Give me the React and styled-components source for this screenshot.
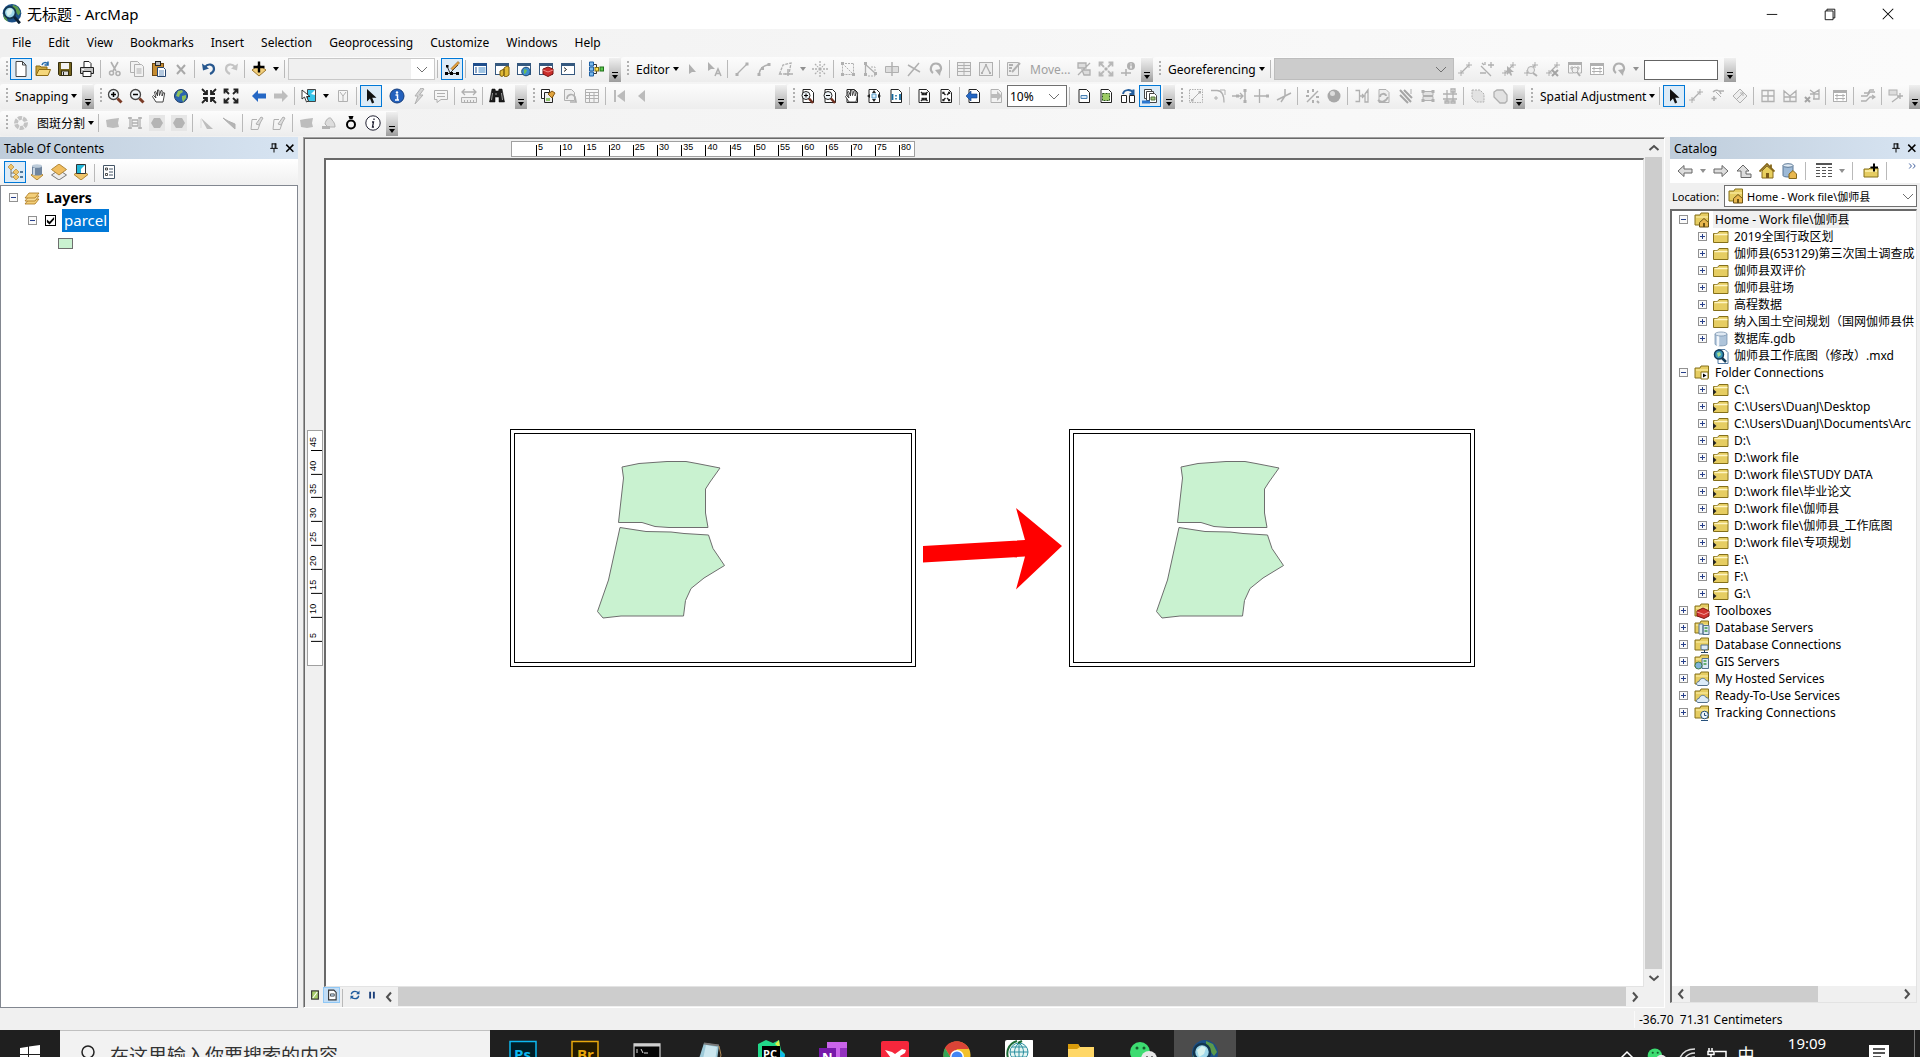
import styled, { createGlobalStyle, css } from "styled-components"

const GlobalStyle = createGlobalStyle`
  * {
    box-sizing: border-box;
  }

  body {
    margin: 0;
    overflow: hidden;
    font-family: "Noto Sans", "Noto Sans CJK SC", sans-serif;
    font-size: 12px;
    color: #000;
  }

  button, input, select {
    font: inherit;
    color: inherit;
    margin: 0;
    padding: 0;
    border: 0;
    background: none;
  }
`;

/* ---------- icons ---------- */

const G = '#b0b0b0';
const D = '#222';
const Y = '#e6cd62';

const page = <path d="M3 1.5h7.5l3 3v10H3z" fill="#fff" stroke={D} />;
const greyPage = <path d="M3 1.5h7.5l3 3v10H3z" fill="#f2f2f2" stroke={G} />;
const backFolder = <><path d="M1 3h5l1-2h7.500v12H1z" fill={Y} stroke="#85701a" /><path d="M2 5h12" stroke="#fff3b0" /></>;
const globe = <><circle cx="8" cy="8" r="6.500" fill="#2c66b0" stroke="#1b3b66" /><path d="M5 3l4-1 1 2-3 2-1 3-3-1zM9 8l4-1v3l-3 4-1-3z" fill="#8fc25a" /></>;
const win = (c) => <><rect x="1.500" y="2.500" width="13" height="11" fill="#fff" stroke={c} /><path d="M1 3.500h14" stroke={c} strokeWidth="3" /></>;
const lens = <><circle cx="6.500" cy="6.500" r="5" fill="#eef4f8" stroke="#444" strokeWidth="1.300" /><path d="M10.500 10.500l4 4" stroke="#7a3b26" strokeWidth="3" /></>;
const inward = (c) => <path d="M1 1l4 4M15 1l-4 4M1 15l4-4M15 15l-4-4M6 2v4H2M10 2v4h4M6 14v-4H2M10 14v-4h4" stroke={c} strokeWidth="1.800" fill="none" />;
const outward = (c) => <path d="M2 2l4 4M14 2l-4 4M2 14l4-4M14 14l-4-4M1.500 5.500v-4h4M10.500 1.500h4v4M1.500 10.500v4h4M10.500 14.500h4v-4" stroke={c} strokeWidth="1.800" fill="none" />;
const hand = <path d="M5 14L1.500 8.500l1-1L5 10 3.500 4l1.200-.5L6.500 8 6.500 2h1.300L8.500 7.500 10 2.500l1.200.3L11 8l1.500-3.500 1.200.5L12 14z" fill="#fff" stroke="#333" strokeWidth=".9" />;
const smallInward = <path d="M5 4l2.500 2.500M11.500 4L9 6.500M5 13l2.500-2.500M11.500 13L9 10.500M7.500 4.500v2h-2M9 4.500v2h2M7.500 12.500v-2h-2M9 12.500v-2h2" stroke={D} strokeWidth="1.400" fill="none" />;
const smallOutward = <path d="M5 6V4.500h1.500M10 4.500h1.500V6M5 11v1.500h1.500M10 12.500h1.500V11M5 4.500l2.500 2.500M11.500 4.500L9 7M5 12.500L7.500 10M11.500 12.500L9 10" stroke={D} strokeWidth="1.400" fill="none" />;
const leftArrow = (c) => <path d="M1 8l6-6v3.500h8v5H7V14z" fill={c} />;
const rightArrow = (c) => <path d="M15 8L9 2v3.500H1v5h8V14z" fill={c} />;
const link = <><path d="M4 12l8-8" stroke={G} strokeWidth="1.300" /><path d="M1 12h6M4 9v6M9 4h6M12 1v6" stroke={G} /></>;
const pointer = <path d="M4 1v12.500l3-3 2 5 2.200-1-2-4.700H13.500z" fill="#111" />;
const lensOnPage = (
  <>
    {page}
    <circle cx="6" cy="7.500" r="4" fill="#eef4f8" stroke={D} />
    <path d="M9 10.500l4 4.500" stroke="#6f2f1f" strokeWidth="2.500" />
  </>
);

const icons = {
  newDoc: <path d="M3 .5h6.500L13 4v11.500H3zM9.500.5V4H13" fill="#fff" stroke="#444" />,
  open: <><path d="M1 14V5h4l1 1h6v3" fill="#c9a53a" stroke="#8d6a13" /><path d="M1 14.500L4 8.500h11.500L13 14.500z" fill="#f5d77b" stroke="#8d6a13" /><path d="M7 4c1-3 4-3 6-1M13 .5V4H9.500" fill="none" stroke="#2268a8" strokeWidth="1.500" /></>,
  save: <><path d="M1.500 1.500h13v13h-12l-1-1z" fill="#76651d" stroke="#352e10" /><rect x="4" y="2" width="8" height="6" fill="#f4f4f4" /><rect x="4.500" y="10" width="7" height="4.500" fill="#ddd" stroke="#352e10" /><path d="M6.500 11v3" stroke={D} /></>,
  print: <><path d="M5 7V.5h5l2 2V7" fill="#fff" stroke={D} /><path d="M1.500 6.500h13v6h-13z" fill="#c5c5c5" stroke={D} /><path d="M4 10.500h8v5H4z" fill="#fff" stroke={D} /><path d="M3 8.500h2" stroke="#fff" /></>,
  cut: <><path d="M4 1l5 9M11 1L6 10" stroke={G} strokeWidth="1.600" /><circle cx="4.500" cy="12" r="2" fill="none" stroke={G} strokeWidth="1.500" /><circle cx="11" cy="12.500" r="2" fill="none" stroke={G} strokeWidth="1.500" /></>,
  copy: <g fill="#f2f2f2" stroke={G}><path d="M1.500.5h7l2 2v9h-9z" /><path d="M5.500 3.500h7l2 2v10h-9zM7.500 8h5M7.500 10h5M7.500 12h5" /></g>,
  paste: <><rect x="1.500" y="2.500" width="11" height="12" fill="#c58c31" stroke="#6d4815" /><rect x="4.500" y=".5" width="5" height="4" fill="#bbb" stroke={D} /><path d="M6.500 6.500h6l2 2v7h-8z" fill="#fff" stroke="#26456f" /><path d="M8 10h5M8 12h5M8 14h5" stroke="#6a92bd" /></>,
  del: <path d="M4 4l8 9M12 4L4 13" stroke="#a9a9a9" strokeWidth="2" />,
  undo: <><path d="M4 6c3-4 9-3 9 2 0 3-2 4-4 5" fill="none" stroke="#28588f" strokeWidth="2.200" /><path d="M1 2.500l1 7 6-2z" fill="#28588f" /></>,
  redo: <><path d="M12 6C9 2 3 3 3 8c0 3 2 4 4 5" fill="none" stroke="#c4c4c4" strokeWidth="2.200" /><path d="M15 2.500l-1 7-6-2z" fill="#c4c4c4" /></>,
  addData: <><path d="M8 4l7 5-7 6-7-6z" fill="#f3cf7a" stroke="#9b7630" /><path d="M8 .5v11M2.500 6h11" stroke="#000" strokeWidth="2.400" /></>,
  editor: <><path d="M2 12.500h12M3 5l3 7L14 4" stroke="#333" fill="none" /><path d="M7 7.500L14 .5l1.500 1.500-7 7z" fill="#e8a33a" stroke="#8a5418" strokeWidth=".6" /><path d="M1 11h3v3H1zM6 11h3v3H6zM12 11h3v3h-3zM2 4h2.500v2.500H2z" fill="#000" /></>,
  tocWin: <>{win('#1f4e8c')}<path d="M3 7h2M3 9h2M3 11h2" stroke="#1f4e8c" /><path d="M6.500 7h7M6.500 9h7M6.500 11h7" stroke="#3e87c7" /></>,
  catalogWin: <>{win('#36597f')}<path d="M6 10l4-2v6l-2 1.500-2-1zM10 7l3-2 2 1v8l-3 2-2-1z" fill="#e0ba36" stroke="#7b5d0e" /></>,
  searchWin: <>{win('#36597f')}<circle cx="10" cy="10.500" r="4.300" fill="#3d8ccf" stroke="#1d4770" /><path d="M8 8l3 1-1 3-2 1z" fill="#6bbf59" /></>,
  toolboxWin: <>{win('#36597f')}<path d="M5 8l5-2 5 2v5l-5 2.500L5 13z" fill="#cb2e2b" stroke="#771413" /><path d="M5 9l5 2 5-2" stroke="#f08a86" fill="none" /></>,
  python: <>{win('#36597f')}<path d="M4 6.500l2.500 2L4 10.500" stroke={D} fill="none" /></>,
  model: <><path d="M5 3.500h3.500v9H5M8.500 8H11" stroke="#333" fill="none" /><path d="M1.500 1h4v4h-4zM1.500 6h4v4h-4zM1.500 11h4v4h-4z" fill="#79b8ea" stroke="#1c5fa3" /><rect x="7" y="6.500" width="3.500" height="3.500" fill="#ffe14f" stroke="#86700e" /><rect x="12" y="6" width="3.500" height="4" fill="#5cc74f" stroke="#20711a" /></>,
  playGrey: <path d="M5 3v10l3-2h4z" fill={G} />,
  annotGrey: <><path d="M2 1v9l3-2h4z" fill={G} /><path d="M9 15l3-7 3 7M10 12.500h4" fill="none" stroke={G} strokeWidth="1.500" /></>,
  line: <><path d="M3 13L13 3" stroke={G} strokeWidth="1.300" /><path d="M1.500 12h3v3h-3zM11.500 1.500h3v3h-3z" fill={G} /></>,
  arc: <><path d="M3 13C4 7 7 5 13 3.500" fill="none" stroke={G} strokeWidth="1.500" /><path d="M1.500 12h3v3h-3zM5 6h3v3H5zM11.500 2h3v3h-3z" fill={G} /></>,
  poly: <><path d="M1.500 13L5 4l8-2-2 11z" fill="none" stroke={G} strokeWidth="1.300" strokeDasharray="3 1" /><path d="M10 8v7M7 13h8" stroke={G} strokeWidth="1.500" /></>,
  burst: <><path d="M8 0v5M8 11v5M0 8h5M11 8h5M3 3l3 3M13 3l-3 3M3 13l3-3M13 13l-3-3" stroke={G} strokeWidth="1.300" strokeDasharray="2 1" /><path d="M6.500 6.500h3v3h-3z" fill={G} /></>,
  edges: <><path d="M2.500 2.500v11M2.500 2.500L13 13M2.500 13.500h11M13.500 2.500v11M2 2.500h11" fill="none" stroke={G} strokeDasharray="2 1" /><path d="M1 1h3v3H1zM1 12h3v3H1zM12 12h3v3h-3z" fill={G} /></>,
  reshape: <><path d="M3.500 1v13M3 3l10 9" stroke={G} strokeWidth="1.300" /><path d="M9 6h4v9H5" fill="none" stroke={G} strokeDasharray="2 1" /><path d="M2 1h3v3H2zM2 12h3v3H2zM12 11h3v3h-3z" fill={G} /></>,
  cutPoly: <><path d="M1.500 5.500h13v6h-13z" fill="#ddd" stroke={G} /><path d="M8 1v14" stroke={G} strokeWidth="1.500" /></>,
  split: <path d="M2 15L13 2M2 4l12 7" stroke={G} strokeWidth="1.500" />,
  rotate: <><path d="M5 12C1 9 3 2.500 8 2.500s7 6 2.500 9" fill="none" stroke={G} strokeWidth="2.200" /><path d="M7 9l5 6 1-7z" fill={G} /></>,
  table: <><rect x="1.500" y="1.500" width="13" height="13" fill="#eee" stroke={G} /><path d="M2 4.500h12M2 7.500h12M2 10.500h12M8 2v12" stroke={G} /></>,
  sketchProps: <><rect x="1.500" y="1.500" width="13" height="13" fill="#eee" stroke={G} /><path d="M4 12l4-8 4 8" fill="none" stroke={G} strokeWidth="1.300" /><path d="M3 11h2v2H3zM7 3h2v2H7zM11 11h2v2h-2z" fill={G} /></>,
  createFeat: <><path d="M1.500 1.500h11v13h-11z" fill="#eee" stroke={G} /><path d="M3 4h4M3 7h3M3 10h2M6 11l8-9" stroke={G} strokeWidth="2" /></>,
  hatch: <><path d="M2 14L14 2M2 2h8v5H2zM6 9h8v5H8z" fill="#ddd" stroke={G} strokeWidth="1.300" /></>,
  expand: <>{outward('#b8b8b8')}<path d="M6.500 6.500h3v3h-3z" fill={G} /></>,
  infoPoint: <><circle cx="11" cy="5" r="4" fill={G} /><path d="M11 2.500v1M11 4.500v3" stroke="#fff" strokeWidth="1.300" /><path d="M1 12h10M6 8v7" stroke={G} strokeWidth="1.500" /></>,
  link,
  autoLink: <><path d="M9 4h6M12 1v6M2 5l10 10M1 12h6M3 2l2 2M6 1v3" stroke={G} strokeWidth="1.300" /></>,
  selectLink: <>{link}<path d="M6 5v9l2-2 2 3 1-1-1-3h3z" fill={G} /></>,
  zoomLink: <>{link}<circle cx="8" cy="9" r="3.500" fill="#eee" stroke={G} /><path d="M10 12l4 3" stroke={G} strokeWidth="2" /></>,
  delLink: <>{link}<path d="M7 9l6 6M13 9l-6 6" stroke="#a4a4a4" strokeWidth="2" /></>,
  viewLink: <><path d="M1 2.500h14" stroke={G} strokeWidth="3" /><path d="M1.500 2v10h5M14.500 2v10h-2M3 7h10M5 5v4M11 5v4" fill="none" stroke={G} /><circle cx="8" cy="9" r="3" fill="#eee" stroke={G} /><path d="M10 11l3 4" stroke={G} strokeWidth="2" /></>,
  linkTable: <>{win(G)}<path d="M3 7.500h10M3 10.500h10M5 6v3M11 6v3M5 9.500v3M11 9.500v3" stroke={G} /></>,
  zoomIn: <>{lens}<path d="M4 6.500h5M6.500 4v5" stroke="#000" strokeWidth="1.500" /></>,
  zoomOut: <>{lens}<path d="M4 6.500h5" stroke="#000" strokeWidth="1.500" /></>,
  pan: hand,
  globe,
  fixedIn: inward(D),
  fixedOut: outward(D),
  back: leftArrow('#2467c4'),
  forward: rightArrow('#bdbdbd'),
  selectFeat: <><path d="M6.500 1.500h8v12h-8z" fill="#37c4e8" stroke="#444" /><path d="M10 6l4-4v5z" fill="#fff" /><path d="M1 2v9l2.500-2 2 5 2-1-2-4.500H9z" fill="#fff" stroke="#222" strokeWidth=".9" /></>,
  clearSel: <path d="M3.500 2.500h9v11h-9zM5 4l3 4 3-4M8 8v5" fill="none" stroke={G} />,
  pointer,
  identify: <><circle cx="8" cy="8" r="7" fill="#2461bd" stroke="#163e7c" /><circle cx="8" cy="4.500" r="1.200" fill="#fff" /><path d="M6.500 7h2v5M6 12h4" stroke="#fff" strokeWidth="1.500" fill="none" /></>,
  bolt: <path d="M10 0L4 8h3l-3 8 8-9H8.500L13 1z" fill="#d5d5d5" stroke={G} />,
  popup: <path d="M1.500 2.500h13v9H8l-4 3v-3H1.500zM4 5.500h8M4 8.500h8" fill="none" stroke={G} />,
  measure: <><path d="M1 4h14M4 1L1 4l3 3M12 1l3 3-3 3" fill="none" stroke={G} strokeWidth="1.300" /><path d="M.5 9.500h15v5H.5zM3.500 12v2M6.500 12v2M9.500 12v2M12.500 12v2" fill="#eee" stroke={G} /></>,
  find: <><path d="M3 1h3l.5 2h3L10 1h3l2.500 13H10V9H6v5H.5z" fill="#1d1d1d" stroke="#000" strokeWidth=".5" /><path d="M3.500 5L2.500 12M12.500 5l1 7M7 5v2" stroke="#9a9a9a" /></>,
  layersPage: <><path d="M1.500 1.500h8v9h-8z" fill="#fff" stroke={D} /><path d="M4.500 4.500h8v10h-8z" fill="#eee" stroke={D} /><path d="M8 6l4-3 3 2-3 5z" fill="#e0a33c" stroke="#855815" /><path d="M6 10h4v3H6z" fill="#8fc36d" /></>,
  pageSync: <><path d="M2.500 1.500h7l3 3v8h-10z" fill="#eee" stroke={G} /><path d="M5 11c0-5 6-6 8-2l1 5H8" fill="none" stroke={G} strokeWidth="1.700" /></>,
  grid: <path d="M1.500 1.500h13v13h-13zM1 4.500h14M1 7.500h14M1 10.500h14M5.500 4v10M10 4v10" fill="none" stroke={G} />,
  first: <><path d="M3 2v12" stroke="#bbb" strokeWidth="2" /><path d="M13 2v12L5 8z" fill="#bbb" /></>,
  prev: <path d="M11 2v12L4 8z" fill="#bbb" />,
  pageZoomIn: <>{lensOnPage}<path d="M4 7.500h4M6 5.500v4" stroke="#000" /></>,
  pageZoomOut: <>{lensOnPage}<path d="M4 7.500h4" stroke="#000" /></>,
  pagePan: <>{page}{hand}</>,
  pageWhole: <>{page}<path d="M8 2l2 3H6zM8 14l2-3H6zM1 8l3-2v4zM15 8l-3-2v4z" fill={D} /><path d="M6 6h4v4H6z" fill="#dff0fb" stroke="#579bc8" /></>,
  page100: <>{page}<path d="M4.500 6v6M12 6v6" stroke="#15699e" strokeWidth="1.800" /><path d="M8 7v1.500M8 10v1.500" stroke="#15699e" strokeWidth="1.500" /></>,
  pageIn: <>{page}{smallInward}</>,
  pageOut: <>{page}{smallOutward}</>,
  pageBack: <>{page}<path d="M0 8l5-5v3h6v4H5v3z" fill="#2467c4" stroke="#123d7c" strokeWidth=".6" /></>,
  pageFwd: <>{greyPage}<path d="M14 8L9 3v3H3v4h6v3z" fill="#bbb" /></>,
  draft: <>{page}<path d="M5 7.500h6v3H5z" fill="#d7e9f8" stroke="#4981b5" /></>,
  focusFrame: <>{page}<rect x="4.500" y="5.500" width="7" height="7" fill="#9ccb63" stroke="#2c571c" strokeDasharray="2 1" /></>,
  changeLayout: <><path d="M1.500 7.500h5v7h-5zM9.500 7.500h5v7h-5z" fill="#fff" stroke={D} /><path d="M3 6c1-5 8-5 10-1M13.500 1.500V6H9.500" fill="none" stroke="#255f9e" strokeWidth="2" /></>,
  dataDriven: <><path d="M2.500 1.500h7v9h-7z" fill="#fff" stroke="#444" /><path d="M4.500 3.500h7v9h-7z" fill="#fff" stroke="#444" /><path d="M7.500 5.500h5l2 2v7h-7z" fill="#fff" stroke="#444" /><path d="M9 9h4v3H9z" fill="#9fc07d" stroke="#52733a" /><path d="M0 14h8" stroke="#2c77cf" strokeWidth="3" /></>,
  dashLine: <><rect x="1.500" y="1.500" width="13" height="13" fill="none" stroke={G} strokeDasharray="1.500 1" /><path d="M4 12l8-8" stroke={G} /><path d="M3 11h2.500v2.500H3zM10.500 3H13v2.500h-2.500z" fill={G} /></>,
  fillet: <><path d="M1 2.500h6c5 0 7 4 7 12" fill="none" stroke={G} strokeWidth="1.300" /><path d="M10 2h5v5M4 10h4M6 8v4" fill="none" stroke={G} /></>,
  extend: <><path d="M0 8h11M8 5l3 3-3 3" fill="none" stroke={G} strokeWidth="1.300" /><path d="M13 2v12" stroke={G} strokeWidth="1.500" /><path d="M4 6.500h3v3H4zM11.500 1h3v3h-3zM11.500 12h3v3h-3z" fill={G} /></>,
  trim: <><path d="M5.500 1v14M0 8h15" stroke={G} strokeWidth="1.300" /><path d="M12 6.500h3v3h-3z" fill={G} /></>,
  intersect: <path d="M1 12L15 5M9 1v7l-4 6" fill="none" stroke={G} strokeWidth="1.500" />,
  explode: <><path d="M3 14L14 3" stroke={G} strokeWidth="1.500" /><path d="M4 2v3M9 1v3M2 8h3M12 9h3M9 12v3M13 13l2 2" stroke={G} strokeWidth="2" /></>,
  ball: <><circle cx="8" cy="8" r="6.500" fill="#a8a8a8" /><circle cx="6.500" cy="5.500" r="2.500" fill="#ddd" /></>,
  alignEdge: <path d="M1.500 2.500h4v11h-4M6 8h4M8 6l2 2-2 2M14 2l-3 4v8h3z" fill="none" stroke={G} strokeWidth="1.300" />,
  modify: <><path d="M3 1.500h7l3 3v10H3z" fill="#eee" stroke={G} /><path d="M4 9c0-4 6-4 6-1M2 12c3 3 8 2 10-3" fill="none" stroke={G} strokeWidth="2" /></>,
  hatchedBar: <><path d="M2 2l11 12M6 2l8 8M2 7l8 8" stroke="#a5a5a5" strokeWidth="2" /><path d="M13 1v5" stroke={G} /></>,
  ladder: <><path d="M3 3.500h10v4H3zM3 8.500h10v4H3z" fill="#e2e2e2" stroke={G} /><path d="M1.500 2h3v3h-3zM11.500 2h3v3h-3zM1.500 11h3v3h-3zM11.500 11h3v3h-3z" fill={G} /></>,
  mesh: <path d="M5 2v12M11 2v12M1 6h14M1 11h14M3 13h4v2H3zM9 13h4v2H9zM9 1h4v3H9z" fill="none" stroke={G} strokeWidth="1.300" />,
  dashA: <><path d="M2 2h8l4 4v8H6l-4-4z" fill="#e2e2e2" stroke={G} strokeDasharray="2 1" /></>,
  dashB: <path d="M5 2h6l4 5v6l-2 2H8l-6-6V4z" fill="#e2e2e2" stroke={G} strokeWidth="1.300" />,
  edgeMatch: <><path d="M4 13V8M1.500 10.500h5M3 4c3-3 7-2 8 2M9 3h5" fill="none" stroke={G} strokeWidth="1.500" /><path d="M11 9L6 4" stroke={G} /></>,
  diamond: <><path d="M8 1l7 7-7 7-7-7z" fill="#eee" stroke={G} /><path d="M5 11l6-6M8 5h3v3" fill="none" stroke={G} /></>,
  fourGrid: <path d="M2 2.500h12v11H2zM8 2v12M2 8h12" fill="none" stroke={G} strokeWidth="1.300" />,
  envelope: <path d="M2 3v10.500h12V3l-6 5zM2 9h12M8 8v6" fill="none" stroke={G} strokeWidth="1.300" />,
  gridDel: <><path d="M6 2l4 3 5-3v9h-6M6 6h9M10 5v6" fill="none" stroke={G} strokeWidth="1.300" /><path d="M1 9l5 5M6 9l-5 5" stroke="#a4a4a4" strokeWidth="2" /></>,
  attrTransfer: <path d="M1 8h6l3-4h5M1 13h5l4-4h5M4 5h4l2-3h4M12 11l3-2-3-2" fill="none" stroke={G} strokeWidth="1.300" />,
  linkBox: <><rect x="1" y="2" width="8" height="5" fill="#ddd" stroke={G} /><path d="M4 14l8-6M9 8h6M12 5v6" stroke={G} strokeWidth="1.300" /></>,
  ring: <circle cx="8" cy="8" r="5" fill="none" stroke="#c3c3c3" strokeWidth="4" strokeDasharray="4 1" />,
  patch: <path d="M1 5l5-1 8-1-1 5 1 4-6 1-6-1z" fill="#bdbdbd" />,
  fence: <path d="M3 2v12M13 2v12M1 3h4M11 3h4M1 13h4M11 13h4M5 5h6v6H5zM5 8h6" fill="none" stroke={G} strokeWidth="1.300" />,
  blob: <><rect width="16" height="16" fill="#e6e6e6" /><path d="M5 3h6l3 5-3 5H5L2 8z" fill="#b4b4b4" /></>,
  slopeA: <><path d="M2 3l12 11H8z" fill="#bdbdbd" /><path d="M2 4v9" stroke="#ddd" /></>,
  slopeB: <path d="M2 3l12 11V9L7 6z" fill="#b4b4b4" stroke={G} />,
  penBox: <><path d="M8 4.500H3l-1 10h7l2-6" fill="none" stroke={G} /><path d="M7 9l5-7 2 1-4 7z" fill="#ddd" stroke={G} /></>,
  stampGrey: <><path d="M4 9c1-6 6-8 7-4 2 2 3 4 3 7H7z" fill="#ddd" stroke={G} /><path d="M1 11h8v3H1z" fill="#b4b4b4" /></>,
  ringBold: <><path d="M5.500 1h5L9.500 4h-3z" fill="#000" /><circle cx="8" cy="9.500" r="4" fill="none" stroke="#000" strokeWidth="2" /></>,
  infoRing: <><circle cx="8" cy="8" r="7.200" fill="#fff" stroke="#223" /><path d="M9 3.500v1.500M7 7h1.500L7.500 12H9" fill="none" stroke="#223" strokeWidth="1.300" /></>,

  listOrder: <><path d="M4 5v8h4M4 9h4" fill="none" stroke="#777" /><path d="M4 0l3 3-3 3-3-3zM9 5l3 3-3 3-3-3zM9 10l3 3-3 3-3-3z" fill="#f0c56a" stroke="#b18635" strokeWidth=".7" /><path d="M13 8h3M13 13h3" stroke="#23547e" strokeWidth="1.500" /></>,
  listSource: <><path d="M8 7l6 4-6 5-6-5z" fill="#f0c56a" stroke="#b18635" /><path d="M3 2v8c0 2 10 2 10 0V2z" fill="#70869f" /><ellipse cx="8" cy="2" rx="5" ry="1.800" fill="#bccbd9" /><path d="M5 4v7" stroke="#c9d6e2" strokeWidth="2" /></>,
  listVisible: <><path d="M8 6l7.500 5L8 16 .5 11z" fill="#ececec" stroke="#777" /><path d="M8 0l7.500 5.500L8 11 .5 5.500z" fill="#f0bd5f" stroke="#b18635" /></>,
  listSelect: <><path d="M8 6l7 4.500L8 16l-7-5.500z" fill="#f0c56a" stroke="#b18635" /><path d="M3.500.5h9v9h-9z" fill="#22b7d8" stroke="#333" /><path d="M8 5l4-4v8H8z" fill="#fff" /></>,
  options: <><path d="M2.500 1.500h11v13h-11z" fill="#fff" stroke="#456" /><path d="M8 5h4M8 8h4M8 11h4" stroke="#456" /><path d="M4.500 4h2v2h-2zM4.500 9.500h2v2h-2z" fill="none" stroke={D} strokeWidth=".8" /></>,
  layerStack: <g stroke="#a87418" strokeWidth=".8"><path d="M5 9h10l-4 5H1z" fill="#f3cf7a" /><path d="M5 6h10l-4 5H1z" fill="#f7dc99" /><path d="M5 3h10l-4 5H1z" fill="#f3cf7a" /></g>,

  catBack: <path d="M1 8l6-5.500v3.500h8v4H7v3.500z" fill="#ddd" stroke="#666" />,
  catFwd: <path d="M15 8L9 2.500v3.500H1v4h8v3.500z" fill="#ddd" stroke="#666" />,
  catUp: <path d="M7 2l6 6h-3v3h5v3.500H5V8H1z" fill="#ddd" stroke="#666" />,
  home: <><path d="M3 8v7h11V8L8 3z" fill="#e8cf5e" stroke="#86681a" /><path d="M.5 8.500L8 1l7.500 7.500M12 1.500v3" fill="none" stroke="#86681a" strokeWidth="1.800" /><path d="M7 10h3v5H7z" fill="#7b5a18" /></>,
  homeGdb: <><path d="M1 2.500v10c0 2 10 2 10 0v-10z" fill="#9db9d6" stroke="#5a7694" /><ellipse cx="6" cy="2.500" rx="5" ry="1.800" fill="#e2ecf5" stroke="#5a7694" /><path d="M7 11v4.500h7.500V11L11 7.500z" fill="#e8b74e" stroke="#86681a" /></>,
  catTable: <><path d="M0 1h16" stroke="#555" strokeWidth="2" /><path d="M0 4.500h4M6 4.500h4M12 4.500h4M0 7.500h4M6 7.500h4M12 7.500h4M0 10.500h4M6 10.500h4M12 10.500h4M0 13.500h4M6 13.500h4M12 13.500h4" stroke="#555" /></>,
  addFolder: <><path d="M1 14V6h5l1-1h8v9z" fill={Y} stroke="#85701a" /><path d="M2 8h12" stroke="#fff3b0" strokeWidth="1.500" /><path d="M11 .5v8M7.500 4.500h7.500" stroke="#000" strokeWidth="2" /></>,

  folder: <><path d="M.5 13.500v-9h4l1.500-2h9v11z" fill={Y} stroke="#85701a" /><path d="M1.500 5.500h13" stroke="#fff6c6" strokeWidth="1.500" /></>,
  folderLink: <><path d="M.5 13.500v-9h4l1.500-2h9v11z" fill={Y} stroke="#85701a" /><path d="M1.500 5.500h13" stroke="#fff6c6" strokeWidth="1.500" /><path d="M0 7l3.500 3L0 13z" fill={D} /></>,
  folderHome: <>{backFolder}<path d="M5.500 15v-4.500L10 6.500l4.500 4V15z" fill="#e8b74e" stroke="#6c5314" /><path d="M9 11h2v4H9z" fill="#6c5314" /></>,
  folderConn: <>{backFolder}<path d="M7 7h7v7H7z" fill="#fff" stroke="#85701a" /><path d="M9 8.500l3.500 2-3.500 2z" fill="#000" /></>,
  gdb: <><path d="M2 3v10c0 2.500 12 2.500 12 0V3z" fill="#aec4da" stroke="#6f8aa6" strokeWidth=".7" /><path d="M5 4v11" stroke="#f3f7fb" strokeWidth="2.500" /><ellipse cx="8" cy="3" rx="6" ry="2" fill="#dfe9f3" stroke="#6f8aa6" strokeWidth=".7" /></>,
  mxd: <><path d="M5 1.500h7l3 3v11H5z" fill="#fff" stroke="#557da5" /><circle cx="6" cy="6.500" r="4.500" fill="#3995b8" stroke="#143c58" strokeWidth="1.500" /><path d="M4 5l3-1 1 3-3 2z" fill="#a6dd90" /><path d="M9 10l4 4" stroke="#143c58" strokeWidth="2.500" /></>,
  toolboxes: <>{backFolder}<path d="M3 8l6-3 6 3v5l-5 2.500L3 13z" fill="#d13430" stroke="#7c1614" /><path d="M3 9l7 2.500L15 9" stroke="#f39c98" fill="none" /></>,
  dbServer: <>{backFolder}<path d="M5 4h4v10H5zM9 5.500h6v9H9z" fill="#dce9f4" stroke="#55728e" /><path d="M10.500 8h3M10.500 11h3" stroke="#3e9b45" strokeWidth="1.500" /></>,
  dbConn: <>{backFolder}<path d="M7 8v4c0 1 7 1 7 0V8z" fill="#dce9f4" stroke="#55728e" /><path d="M10.500 13v2M7 15.500h7" stroke="#26435e" /></>,
  gisServer: <>{backFolder}<path d="M8 4.500h6.500v10H8z" fill="#dce9f4" stroke="#55728e" /><path d="M9.500 7h3M9.500 10h3" stroke="#3e9b45" strokeWidth="1.500" /><circle cx="4.500" cy="11.500" r="3.500" fill="#7fb3da" stroke="#3e7a4a" /></>,
  cloud: <>{backFolder}<path d="M4 14.500c-3-1-1-4 1-4 1-4 6-4 7-1 3 0 4 4 1 5z" fill="#dcebf8" stroke="#55728e" /></>,
  tracking: <>{backFolder}<circle cx="10.500" cy="10" r="3.800" fill="#eef4fa" stroke="#26507c" /><path d="M10.500 8v2.500h2M7 15.500h7" stroke="#26507c" fill="none" /></>,

  pin: <path d="M5 2.500h6M5.500 2v6M10.500 2v6M9.500 2v6M3 8.500h10M8 9v5" stroke="#000" strokeWidth="1.300" />,
  close: <path d="M3 3.500l9.500 9.500M12.500 3.500L3 13" stroke="#000" strokeWidth="2" />,
  dataView: <><rect x="3.500" y="2.500" width="9" height="11" fill="#a9cf6b" stroke="#333" strokeWidth="1.500" /><path d="M5 12l6-8" stroke="#fff" strokeWidth="1.500" /></>,
  layoutView: <><path d="M3.500 1.500h7l3 3v10h-10z" fill="#fff" stroke="#333" strokeWidth="1.500" /><path d="M6 6.500h5v3H6z" fill="#c3dcf3" stroke="#333" /></>,
  refresh: <><path d="M3 7c1-5 8-5 10-1M13 9c-1 5-8 5-10 1" fill="none" stroke="#1d5a9c" strokeWidth="1.700" /><path d="M14 2v5H9.500zM2 14V9h4.500z" fill="#1d5a9c" /></>,
  pause: <path d="M5.500 3.500v9M10.500 3.500v9" stroke="#1b3f7a" strokeWidth="2.500" />,
  chevLeft: <path d="M10 3.500L6 8l4 4.500" fill="none" stroke="#505050" strokeWidth="2" />,
  chevRight: <path d="M6 3.500L10 8l-4 4.500" fill="none" stroke="#505050" strokeWidth="2" />,
  chevUp: <path d="M3.500 10L8 6l4.500 4" fill="none" stroke="#505050" strokeWidth="2" />,
  chevDown: <path d="M3.500 6L8 10l4.500-4" fill="none" stroke="#505050" strokeWidth="2" />,
  doubleRight: <path d="M2 4l3.500 4L2 12M8 4l3.500 4L8 12" fill="none" stroke="#3a5a9a" strokeWidth="1.500" />,
  thinDown: <path d="M3 6l5 5 5-5" fill="none" stroke="#707070" />,
  minimize: <path d="M2 8.500h12" stroke="#000" />,
  restore: <path d="M2.500 4.500h9v10h-9zM4.500 4.500v-2h9v10h-2" fill="none" stroke="#000" />,
  quit: <path d="M2 2l12 12M14 2L2 14" stroke="#000" strokeWidth="1.200" />,
};

const Svg = styled.svg`
  display: block;
  flex: none;
  width: ${({ $size }) => $size || 16}px;
  height: ${({ $size }) => $size || 16}px;
`;

const Icon = ({ name, size }) => (
  <Svg $size={size} viewBox="0 0 16 16" aria-hidden="true">{icons[name]}</Svg>
);

/* ---------- window chrome ---------- */

const Window = styled.div`
  display: flex;
  flex-direction: column;
  height: 100vh;
  background: #f0f0f0;
`;

const TitleBar = styled.header`
  display: flex;
  align-items: center;
  height: 29px;
  padding: 0 3px 2px 2px;
  background: #fff;

  h1 {
    flex: 1;
    margin: 0 0 0 5px;
    font-size: 15px;
    font-weight: 400;
    line-height: 22px;
  }
`;

const AppMark = styled.span`
  width: 20px;
  height: 20px;

  svg {
    display: block;
  }
`;

const WindowButton = styled.button`
  display: flex;
  align-items: center;
  justify-content: center;
  width: 58px;
  height: 26px;
`;

const ToolArea = styled.div`
  height: 108px;
  background: linear-gradient(90deg, #f0f0f0, #f7f7f7 60%, #fbfbfb);
`;

const MenuBar = styled.nav`
  display: flex;
  align-items: center;
  gap: 17px;
  height: 28px;
  padding: 0 0 1px 12px;
`;

const ToolRow = styled.div`
  display: flex;
  align-items: flex-start;
  height: 27px;
`;

const Bar = styled.div`
  display: flex;
  flex: none;
  align-items: flex-start;
  height: 25px;
  padding-top: 1px;
  border-radius: 3px;
  background: linear-gradient(#fcfcfc, #f3f3f3 60%, #ededed);
`;

const Grip = styled.span`
  width: 2px;
  height: 16px;
  margin: 3px 2px 0 6px;
  background: repeating-linear-gradient(#b0b0b0 0 2px, transparent 2px 4px);
`;

const Separator = styled.span`
  width: 1px;
  height: 18px;
  margin: 2px 3px 0 2px;
  background: #b9b9b9;
`;

const Space = styled.span`
  width: ${({ $width }) => $width}px;
`;

const ToolButton = styled.button`
  display: flex;
  flex: none;
  align-items: center;
  justify-content: center;
  width: 22px;
  height: 22px;
  border: 1px solid transparent;
  ${({ $active }) => $active && css`
    border-color: #0078d7;
    background: #dcebf7;
  `}
`;

const DropButton = styled.button`
  display: flex;
  align-items: center;
  justify-content: center;
  width: 12px;
  height: 22px;
`;

const Caret = styled.span`
  border: 3px solid transparent;
  border-top: 4px solid ${({ $grey }) => ($grey ? '#909090' : '#000')};
  border-bottom: 0;
`;

const LabelButton = styled.button`
  display: flex;
  align-items: center;
  gap: 3px;
  width: ${({ $width }) => $width}px;
  height: 22px;
  padding-left: 5px;
  white-space: nowrap;
  color: ${({ $grey }) => ($grey ? '#a0a0a0' : '#000')};
`;

const More = styled.button`
  display: flex;
  flex-direction: column;
  align-items: center;
  justify-content: flex-end;
  gap: 2px;
  width: 12px;
  height: 24px;
  margin-left: 2px;
  padding-bottom: 3px;
  background: linear-gradient(#f0f0f0, #c4c4c4 60%, #9c9c9c);

  &::before {
    content: "";
    width: 6px;
    height: 1px;
    background: #000;
  }
`;

const Combo = styled.span`
  display: grid;
  grid-template-columns: 1fr 20px;
  align-items: center;
  width: ${({ $width }) => $width}px;
  height: 22px;
  border: 1px solid ${({ $edge }) => $edge || '#c8c8c8'};
  background: ${({ $fill }) => $fill || '#fff'};

  select {
    grid-area: 1 / 1 / 2 / 3;
    height: 18px;
    margin: 0 0 0 2px;
    appearance: none;
    color: #000;
    outline: 0;
  }

  svg {
    grid-area: 1 / 2 / 2 / 3;
    pointer-events: none;
  }
`;

const AngleBox = styled.input`
  width: 74px;
  height: 20px;
  margin: 2px 4px 0 2px;
  border: 1px solid #646464;
  background: #fff;
`;

const rows = [
  [
    ['*newDoc', 'open', 'save', 'print', '|', 'cut', 'copy', 'paste', 'del', '|', 'undo', 'redo', '|', 'addData', 'v', '|',
      { combo: 147, label: 'Scale', fill: 'linear-gradient(90deg, #f0f0f0 84%, #fff 84%)' }, '|', '*editor', '|',
      'tocWin', 'catalogWin', 'searchWin', 'toolboxWin', 'python', '|', 'model'],
    [{ text: 'Editor', width: 50, menu: true }, 'playGrey', 'annotGrey', '|', 'line', 'arc', 'poly', 'g', 'burst', '|',
      'edges', 'reshape', 'cutPoly', 'split', 'rotate', '|', 'table', 'sketchProps', '|', 'createFeat',
      { text: 'Move...', width: 48, grey: true }, 'hatch', 'expand', 'infoPoint'],
    [{ text: 'Georeferencing', width: 105, menu: true }, '|', { combo: 180, label: 'Raster layer', fill: '#cccccc', edge: '#bdbdbd' },
      'link', 'autoLink', 'selectLink', 'zoomLink', 'delLink', 'viewLink', 'linkTable', 'rotate', 'g', { angle: true }],
  ],
  [
    [{ text: 'Snapping', width: 70, menu: true }],
    ['zoomIn', 'zoomOut', 'pan', 'globe', { space: 6 }, 'fixedIn', 'fixedOut', { space: 6 }, 'back', 'forward', '|', 'selectFeat', 'v',
      'clearSel', '|', '*pointer', { space: 4 }, 'identify', 'bolt', 'popup', '|', 'measure', '|', 'find', { space: 5 }],
    ['layersPage', 'pageSync', 'grid', '|', 'first', 'prev', { space: 120 }],
    ['pageZoomIn', 'pageZoomOut', 'pagePan', 'pageWhole', 'page100', '|', 'pageIn', 'pageOut', '|', 'pageBack', 'pageFwd',
      { combo: 60, label: 'Zoom', value: '10%', edge: '#707070' }, '|', 'draft', 'focusFrame', 'changeLayout', '*dataDriven'],
    ['dashLine', 'fillet', 'extend', 'trim', 'intersect', '|', 'explode', 'ball', '|', 'alignEdge', 'modify', 'hatchedBar',
      'ladder', 'mesh', '|', 'dashA', 'dashB'],
    [{ text: 'Spatial Adjustment', width: 122, menu: true }, '|', '*pointer', 'link', 'edgeMatch', 'diamond', '|', 'fourGrid',
      'envelope', 'gridDel', '|', 'linkTable', '|', 'attrTransfer', '|', 'linkBox'],
  ],
  [
    ['ring', { text: '图斑分割', width: 64, menu: true }, '|', 'patch', 'fence', 'blob', 'blob', '|', 'slopeA', 'slopeB', '|',
      'penBox', 'penBox', '|', 'patch', 'stampGrey', 'ringBold', 'infoRing'],
  ],
];

const ToolItem = ({ item }) => {
  if (item === '|') return <Separator />
  if (item === 'v' || item === 'g') return <DropButton aria-label="More options"><Caret $grey={item === 'g'} /></DropButton>
  if (item.space) return <Space $width={item.space} />
  if (item.angle) return <AngleBox aria-label="Rotation angle" />
  if (item.combo) {
    return (
      <Combo $width={item.combo} $fill={item.fill} $edge={item.edge}>
        <select aria-label={item.label} defaultValue={item.value}>
          <option>{item.value}</option>
        </select>
        <Icon name="thinDown" />
      </Combo>
    )
  }
  if (item.text) {
    return (
      <LabelButton $width={item.width} $grey={item.grey}>
        {item.text}
        {item.menu && <Caret />}
      </LabelButton>
    )
  }
  const active = item[0] === '*'
  const name = active ? item.slice(1) : item
  return <ToolButton $active={active} aria-label={name}><Icon name={name} /></ToolButton>
}

const menus = ['File', 'Edit', 'View', 'Bookmarks', 'Insert', 'Selection', 'Geoprocessing', 'Customize', 'Windows', 'Help'];

/* ---------- panels ---------- */

const Workspace = styled.main`
  display: grid;
  grid-template-columns: 298px minmax(0, 1fr) 250px;
  flex: 1;
  min-height: 0;
  gap: 0 5px;
`;

const Panel = styled.section`
  display: flex;
  flex-direction: column;
  min-width: 0;
  min-height: 0;
`;

const PanelTitle = styled.div`
  display: flex;
  align-items: center;
  gap: 2px;
  height: 22px;
  padding: 0 1px 0 4px;
  background: linear-gradient(90deg, #bfcddb, #d7e4f2);

  h2 {
    flex: 1;
    margin: 0;
    font-size: 12px;
    font-weight: 400;
  }

  button {
    padding: 1px;
  }
`;

const PanelTools = styled.div`
  display: flex;
  align-items: center;
  height: 26px;
  padding-left: 4px;
  background: linear-gradient(#fff, #f0f0f0);
`;

const CatalogTools = styled(PanelTools)`
  gap: 1px;
  height: 24px;
  background: #fff;

  ${Separator} {
    margin: 0 6px 0 3px;
  }
`;

const Overflow = styled.button`
  align-self: flex-start;
  margin: 2px 2px 0 auto;
`;

const TreeBox = styled.ul`
  flex: 1;
  min-height: 0;
  margin: 0;
  padding: 0;
  overflow: hidden;
  list-style: none;
  background: #fff;
  border: 1px solid #828790;
`;

const LayerRow = styled.li`
  display: flex;
  align-items: center;
  gap: 6px;
  height: 23px;
  padding-left: ${({ $indent }) => $indent}px;
  font-size: 15px;

  strong {
    font-size: 14px;
  }

  label {
    padding: 0 2px;
    line-height: 23px;
    color: #fff;
    background: #0078d7;
  }
`;

const Expander = styled.button`
  display: flex;
  flex: none;
  align-items: center;
  justify-content: center;
  width: 9px;
  height: 9px;
  border: 1px solid #919191;
  background:
    linear-gradient(#27408b, #27408b) center / 5px 1px no-repeat,
    linear-gradient(#27408b, #27408b) center / 1px ${({ $open }) => ($open ? 1 : 5)}px no-repeat,
    #fafafa;
`;

const Check = styled.input`
  width: 11px;
  height: 11px;
  margin-left: 2px;
  appearance: none;
  border: 1px solid #000;
  background: #fff;

  &:checked::before {
    content: "";
    display: block;
    width: 9px;
    height: 9px;
    background: #000;
    clip-path: polygon(10% 40%, 40% 65%, 90% 10%, 90% 40%, 40% 95%, 10% 70%);
  }
`;

const Swatch = styled.span`
  width: 15px;
  height: 11px;
  border: 1px solid #6e6e6e;
  background: #c9f2d0;
`;

const LocationRow = styled.div`
  display: flex;
  align-items: center;
  gap: 8px;
  height: 26px;
  padding: 0 3px 0 2px;
  font-size: 11px;

  > label {
    width: 44px;
  }
`;

const LocationBox = styled.span`
  display: flex;
  flex: 1;
  align-items: center;
  min-width: 0;
  height: 22px;
  padding-left: 3px;
  border: 1px solid #707070;
  background: #fff;

  select {
    flex: 1;
    min-width: 0;
    margin-left: 3px;
    appearance: none;
  }
`;

const CatalogBox = styled.div`
  display: flex;
  flex-direction: column;
  flex: 1;
  min-height: 0;
  margin: 0 3px 5px 0;
  border: 1px solid #e3e3e3;
  border-top: 2px solid #696969;
  border-left: 2px solid #696969;
  background: #fff;
`;

const CatalogTree = styled.ul`
  flex: 1;
  min-height: 0;
  margin: 0;
  padding: 0;
  overflow: hidden;
  list-style: none;
`;

const CatalogRow = styled.li`
  display: flex;
  align-items: center;
  height: 17px;
  padding-left: ${({ $level }) => 7 + $level * 19}px;
  white-space: nowrap;
  line-height: 17px;

  svg {
    margin: 0 3px 0 ${({ $leaf }) => ($leaf ? 15 : 6)}px;
  }

  span {
    padding-left: 2px;
    background: ${({ $marked }) => ($marked ? '#f0f0f0' : 'none')};
  }
`;

const catalog = [
  { t: 'Home - Work file\\伽师县', i: 'folderHome', open: true },
  { t: '2019全国行政区划', i: 'folder', l: 1 },
  { t: '伽师县(653129)第三次国土调查成', i: 'folder', l: 1 },
  { t: '伽师县双评价', i: 'folder', l: 1 },
  { t: '伽师县驻场', i: 'folder', l: 1 },
  { t: '高程数据', i: 'folder', l: 1 },
  { t: '纳入国土空间规划（国网伽师县供', i: 'folder', l: 1 },
  { t: '数据库.gdb', i: 'gdb', l: 1 },
  { t: '伽师县工作底图（修改）.mxd', i: 'mxd', l: 1, leaf: true },
  { t: 'Folder Connections', i: 'folderConn', open: true },
  ...['C:\\', 'C:\\Users\\DuanJ\\Desktop', 'C:\\Users\\DuanJ\\Documents\\Arc', 'D:\\', 'D:\\work file', 'D:\\work file\\STUDY DATA',
    'D:\\work file\\毕业论文', 'D:\\work file\\伽师县', 'D:\\work file\\伽师县_工作底图', 'D:\\work file\\专项规划', 'E:\\', 'F:\\', 'G:\\',
  ].map(t => ({ t, i: 'folderLink', l: 1 })),
  { t: 'Toolboxes', i: 'toolboxes' },
  { t: 'Database Servers', i: 'dbServer' },
  { t: 'Database Connections', i: 'dbConn' },
  { t: 'GIS Servers', i: 'gisServer' },
  { t: 'My Hosted Services', i: 'cloud' },
  { t: 'Ready-To-Use Services', i: 'cloud' },
  { t: 'Tracking Connections', i: 'tracking' },
];

/* ---------- scrollbars ---------- */

const ScrollTrack = styled.div`
  display: flex;
  flex: 1;
  flex-direction: ${({ $vertical }) => ($vertical ? 'column' : 'row')};
  align-items: center;
  min-height: 0;
  background: #f0f0f0;

  button {
    flex: none;
    padding: ${({ $vertical }) => ($vertical ? '1px 0' : '0 1px')};
  }
`;

const Thumb = styled.div`
  flex: ${({ $part }) => $part || 1};
  align-self: stretch;
  background: #cdcdcd;
`;

const ThumbRest = styled.div`
  flex: ${({ $part }) => $part};
`;

/* ---------- layout view ---------- */

const MapFrame = styled.section`
  display: grid;
  grid-template-columns: 19px minmax(0, 1fr) 20px;
  grid-template-rows: 19px minmax(0, 1fr) 20px;
  min-height: 0;
  border: 1px solid #fff;
  border-top-color: #a0a0a0;
  border-left-color: #a0a0a0;
  box-shadow: inset 1px 1px #696969;
  padding: 1px 0 0 1px;
`;

const TopRuler = styled.div`
  grid-column: 1 / 3;
  padding: 2px 0 0 206px;
`;

const TopScale = styled.div`
  display: grid;
  grid-template-columns: 24px repeat(15, minmax(0, 1fr)) 15px;
  width: 404px;
  height: 16px;
  border: 1px solid #a0a0a0;
  background: #fff;
  font-family: "Liberation Sans", sans-serif;
  font-size: 9px;
  line-height: 10px;

  span {
    padding-left: 2px;
    background: linear-gradient(#000, #000) 0 3px / 1px 11px no-repeat;
  }

  span:first-child {
    background: none;
  }
`;

const SideRuler = styled.div`
  display: flex;
  align-items: center;
  padding: 0 0 50px 2px;
`;

const SideScale = styled.div`
  display: grid;
  grid-template-rows: 20px repeat(8, minmax(0, 1fr)) 23px;
  width: 16px;
  height: 236px;
  border: 1px solid #a0a0a0;
  background: #fff;
  font-family: "Liberation Sans", sans-serif;
  font-size: 9px;
  line-height: 10px;

  span {
    writing-mode: vertical-rl;
    transform: rotate(180deg);
    padding-top: 4px;
    background: linear-gradient(#000, #000) 0 0 / 11px 1px no-repeat;
  }

  span:last-child {
    background: none;
  }
`;

const SideScroll = styled.div`
  grid-area: 1 / 3 / 3 / 4;
  display: flex;
  padding: 0 2px 0 1px;
`;

const PageCanvas = styled.div`
  display: flex;
  align-items: center;
  padding: 0 0 50px 184px;
  overflow: hidden;
  background: #fff;
  border: 1px solid #e3e3e3;
  border-top: 2px solid #696969;
  border-left: 2px solid #696969;
`;

const DataFrame = styled.div`
  flex: none;
  padding: 3px;
  border: 1px solid #000;

  svg {
    display: block;
    width: 398px;
    height: 230px;
    border: 1px solid #000;
  }
`;

const Arrow = styled.svg`
  flex: none;
  width: 139px;
  height: 84px;
  margin: 0 7px;
`;

const BottomStrip = styled.div`
  grid-column: 1 / 4;
  display: flex;
  align-items: stretch;
  padding: 0 20px 1px 1px;
`;

const ViewButton = styled.button`
  display: flex;
  align-items: center;
  justify-content: center;
  width: 17px;
  height: 16px;
  border: 1px solid ${({ $active }) => ($active ? '#90c8f6' : 'transparent')};
  background: ${({ $active }) => ($active ? '#c2ddf5' : 'none')};
`;

const StatusBar = styled.footer`
  display: flex;
  justify-content: flex-end;
  align-items: center;
  height: 22px;
  background: #f0f0f0;

  output {
    width: 286px;
    padding-left: 4px;
    border-left: 1px solid #fafafa;
    white-space: pre;
  }
`;

const Parcels = () => (
  <DataFrame>
    <svg viewBox="5 5 396 228" role="img" aria-label="parcel">
      <g fill="#c9f2d0" stroke="#6e6e6e">
        <path d="M112 38l17-3.500 28-2h19l11 2 23 4.500-10 14-4.500 7v24l2.500 14.500h-39l-14-1-13-4h-23.500L113.500 49z" />
        <path d="M110 98.500l26 4 25 .5 13 1.500 24.500 1.500 4.500 13.500 11.500 17-20.500 12.500-13 10.500-5.500 12-2 15.500h-62.500l-18 2-5.500-6.500L98.500 151z" />
      </g>
    </svg>
  </DataFrame>
)

/* ---------- taskbar ---------- */

const Taskbar = styled.div`
  display: flex;
  flex: none;
  align-items: flex-start;
  height: 27px;
  overflow: hidden;
  color: #fff;
  background: #1f1f1f;
`;

const StartButton = styled.button`
  display: flex;
  align-items: flex-start;
  justify-content: center;
  width: 60px;
  height: 50px;
  padding-top: 15px;
`;

const SearchBox = styled.label`
  display: flex;
  align-items: center;
  gap: 14px;
  width: 430px;
  height: 50px;
  margin-right: 2px;
  padding-left: 20px;
  border-top: 1px solid #c0c0c0;
  background: #f2f2f2;

  input {
    flex: 1;
    font-size: 19px;
    line-height: 28px;
  }

  input::placeholder {
    color: #333;
    opacity: 1;
  }
`;

const TaskButton = styled.button`
  display: flex;
  align-items: flex-start;
  justify-content: center;
  width: 62px;
  height: 50px;
  padding-top: 10px;
  background: ${({ $active }) => ($active ? '#4c4c4c' : 'none')};

  svg {
    width: 28px;
    height: 28px;
  }
`;

const Tray = styled.div`
  display: flex;
  align-items: flex-start;
  margin-left: auto;
  padding-right: 5px;
`;

const TrayButton = styled.button`
  width: 30px;
  padding: 17px 5px 0;

  svg {
    display: block;
    width: 20px;
    height: 20px;
  }
`;

const Ime = styled.span`
  width: 28px;
  padding-top: 13px;
  text-align: center;
  font-size: 17px;
  line-height: 24px;
`;

const Clock = styled.time`
  width: 94px;
  padding-top: 2px;
  text-align: center;
  font-size: 15px;
  line-height: 22px;
`;

const Notices = styled(TrayButton)`
  width: 61px;
  padding: 15px 25px 20px 15px;
  border-right: 1px solid #777;
`;

const AppLetters = styled.text`
  font-family: "Open Sans", sans-serif;
  font-weight: 700;
  font-size: ${({ $size }) => $size || 15}px;
`;

const Wechat = () => (
  <svg viewBox="0 0 28 28">
    <circle cx="11" cy="12" r="10" fill="#3ddc71" />
    <circle cx="8" cy="8" r="1.500" fill="#155c2d" /><circle cx="15" cy="8" r="1.500" fill="#155c2d" />
    <circle cx="20" cy="19" r="8" fill="#e8e8e8" />
    <circle cx="18" cy="17" r="1" fill="#555" /><circle cx="23" cy="17" r="1" fill="#555" />
  </svg>
)

const GlobeLens = () => (
  <svg viewBox="0 0 28 28">
    <circle cx="14" cy="13" r="13" fill="#1b4f86" />
    <path d="M15 1l7 3 4 8-3 4-4-5-4-4zM2 14l4 3 2 8-5-4z" fill="#5a9a4c" />
    <circle cx="11" cy="12" r="8" fill="#9fd8ea" stroke="#12354f" strokeWidth="2.500" />
    <path d="M6 10l5-4 4 2-2 6-5 3z" fill="#d9f3ee" />
    <path d="M17 18l8 9" stroke="#0d2236" strokeWidth="4" />
  </svg>
)

const apps = [
  ['Photoshop', <svg viewBox="0 0 28 28"><rect x="1" y="1.500" width="26" height="26" fill="#001d26" stroke="#0db8f0" strokeWidth="1.500" /><AppLetters x="5" y="20" fill="#0db8f0">Ps</AppLetters></svg>],
  ['Bridge', <svg viewBox="0 0 28 28"><rect x="1" y="1.500" width="26" height="26" fill="#231a00" stroke="#e8a80c" strokeWidth="1.500" /><AppLetters x="6" y="20" fill="#e8a80c">Br</AppLetters></svg>],
  ['Command Prompt', <svg viewBox="0 0 28 28"><rect x="1" y="4" width="26" height="24" fill="#050505" stroke="#a9a9a9" strokeWidth="1.500" /><path d="M1 5h26" stroke="#cfcfcf" strokeWidth="3" /><path d="M4 9v4M8 9l2 4M11 13h4" stroke="#ddd" /></svg>],
  ['Notepad', <svg viewBox="0 0 28 28"><path d="M9 3l15 2-3 23H1z" fill="#9cc9d8" /><path d="M11 5l11 2-3 21H6z" fill="#cbe6ee" /><path d="M9 2.500l15 2v2l-15-2z" fill="#777" /><path d="M24 6l2 9-3 13" stroke="#b58a55" fill="none" /></svg>],
  ['PyCharm', <svg viewBox="0 0 28 28"><path d="M1 4l8-4 7 3 6-3 2 10 4 4-3 14H1z" fill="#21d789" /><path d="M18 4l4-4 1 8z" fill="#d9f04b" /><path d="M23 10l5 5-4 13z" fill="#10b7ee" /><rect x="5" y="6" width="18" height="22" fill="#000" /><AppLetters $size="11" x="6" y="18" fill="#fff">PC</AppLetters></svg>],
  ['OneNote', <svg viewBox="0 0 28 28"><path d="M8 2h20v26H8z" fill="#ca64ea" /><path d="M21 8h7v12h-7z" fill="#9332bf" /><rect x="0" y="8" width="17" height="20" fill="#7719aa" /><AppLetters $size="13" x="3" y="22" fill="#fff">N</AppLetters></svg>],
  ['XMind', <svg viewBox="0 0 28 28"><rect x="0" y="1" width="28" height="28" rx="2" fill="#f6273c" /><path d="M4 10l7 2 3 2 7-5 4 1-1 3-5 3 5 9-6-2-4-3-7 5-1-4 4-3-3-4z" fill="#fff" /></svg>],
  ['Chrome', <svg viewBox="0 0 28 28"><circle cx="14" cy="15" r="13.500" fill="#f3c12b" /><path d="M2 8C7-1 21-1 26 9H14l-6 9z" fill="#db4437" /><path d="M2 8c-4 8 0 17 8 20l6-7-8-3z" fill="#33a457" /><circle cx="14" cy="17" r="7" fill="#fff" /><circle cx="14" cy="17" r="5.500" fill="#4285f4" /></svg>],
  ['Globe', <svg viewBox="0 0 28 28"><rect x="0" y="0" width="29" height="29" rx="2" fill="#fff" /><circle cx="14" cy="12" r="9" fill="#e5f5f2" stroke="#2a8fa0" /><path d="M14 3v18M5 12h18M7 7h14M7 17h14M14 3c-6 5-6 13 0 18M14 3c6 5 6 13 0 18" fill="none" stroke="#2a8fa0" /><path d="M12 1C2 4 0 14 5 22M13 3l4-2" fill="none" stroke="#1d6c37" strokeWidth="2" /></svg>],
  ['File Explorer', <svg viewBox="0 0 28 28"><path d="M1 4h10l2 3h14v21H1z" fill="#ffd767" /><path d="M1 4h10l2 3-3 2H1z" fill="#d99b0b" /><path d="M6 19h16v9H6z" fill="#3d93d7" /></svg>],
  ['WeChat', <Wechat />],
  ['ArcMap', <GlobeLens />],
];

const App = () => (
  <Window>
    <GlobalStyle />
    <TitleBar>
      <AppMark><GlobeLens /></AppMark>
      <h1>无标题 - ArcMap</h1>
      <WindowButton aria-label="Minimize"><Icon name="minimize" size={14} /></WindowButton>
      <WindowButton aria-label="Restore"><Icon name="restore" size={14} /></WindowButton>
      <WindowButton aria-label="Close"><Icon name="quit" size={14} /></WindowButton>
    </TitleBar>

    <ToolArea>
      <MenuBar>
        {menus.map(menu => <button key={menu}>{menu}</button>)}
      </MenuBar>
      {rows.map((bars, r) => (
        <ToolRow key={r}>
          {bars.map((items, b) => (
            <Bar key={b} role="toolbar">
              <Grip />
              {items.map((item, i) => <ToolItem key={i} item={item} />)}
              <More aria-label="Toolbar options"><Caret /></More>
            </Bar>
          ))}
        </ToolRow>
      ))}
    </ToolArea>

    <Workspace>
      <Panel>
        <PanelTitle>
          <h2>Table Of Contents</h2>
          <button aria-label="Auto hide"><Icon name="pin" size={12} /></button>
          <button aria-label="Close panel"><Icon name="close" size={12} /></button>
        </PanelTitle>
        <PanelTools>
          <ToolButton $active aria-label="List by drawing order"><Icon name="listOrder" /></ToolButton>
          <ToolButton aria-label="List by source"><Icon name="listSource" /></ToolButton>
          <ToolButton aria-label="List by visibility"><Icon name="listVisible" /></ToolButton>
          <ToolButton aria-label="List by selection"><Icon name="listSelect" /></ToolButton>
          <Separator />
          <ToolButton aria-label="Options"><Icon name="options" /></ToolButton>
        </PanelTools>
        <TreeBox>
          <LayerRow $indent={8}>
            <Expander $open aria-label="Collapse Layers" />
            <Icon name="layerStack" />
            <strong>Layers</strong>
          </LayerRow>
          <LayerRow $indent={27}>
            <Expander $open aria-label="Collapse parcel" />
            <Check type="checkbox" id="parcel" defaultChecked />
            <label htmlFor="parcel">parcel</label>
          </LayerRow>
          <LayerRow $indent={57}>
            <Swatch />
          </LayerRow>
        </TreeBox>
      </Panel>

      <MapFrame>
        <TopRuler>
          <TopScale>
            <span />
            {Array.from({ length: 16 }, (_, i) => <span key={i}>{(i + 1) * 5}</span>)}
          </TopScale>
        </TopRuler>
        <SideScroll>
          <ScrollTrack $vertical>
            <button aria-label="Scroll up"><Icon name="chevUp" /></button>
            <Thumb />
            <button aria-label="Scroll down"><Icon name="chevDown" /></button>
          </ScrollTrack>
        </SideScroll>
        <SideRuler>
          <SideScale>
            {Array.from({ length: 9 }, (_, i) => <span key={i}>{45 - i * 5}</span>)}
            <span />
          </SideScale>
        </SideRuler>
        <PageCanvas>
          <Parcels />
          <Arrow viewBox="0 0 139 84" role="img" aria-label="becomes">
            <path d="M0 40l102-6-9-32 46 38-46 43.500 9-33L0 56.500z" fill="#f00" />
          </Arrow>
          <Parcels />
        </PageCanvas>
        <BottomStrip>
          <ViewButton aria-label="Data view"><Icon name="dataView" size={12} /></ViewButton>
          <ViewButton $active aria-label="Layout view"><Icon name="layoutView" size={12} /></ViewButton>
          <Separator />
          <ViewButton aria-label="Refresh"><Icon name="refresh" size={12} /></ViewButton>
          <ViewButton aria-label="Pause drawing"><Icon name="pause" size={12} /></ViewButton>
          <ScrollTrack>
            <button aria-label="Scroll left"><Icon name="chevLeft" /></button>
            <Thumb />
            <button aria-label="Scroll right"><Icon name="chevRight" /></button>
          </ScrollTrack>
        </BottomStrip>
      </MapFrame>

      <Panel>
        <PanelTitle>
          <h2>Catalog</h2>
          <button aria-label="Auto hide"><Icon name="pin" size={12} /></button>
          <button aria-label="Close panel"><Icon name="close" size={12} /></button>
        </PanelTitle>
        <CatalogTools>
          <ToolButton aria-label="Back"><Icon name="catBack" /></ToolButton>
          <DropButton aria-label="Back history"><Caret $grey /></DropButton>
          <ToolButton aria-label="Forward"><Icon name="catFwd" /></ToolButton>
          <ToolButton aria-label="Up one level"><Icon name="catUp" /></ToolButton>
          <ToolButton aria-label="Home folder"><Icon name="home" /></ToolButton>
          <ToolButton aria-label="Default geodatabase"><Icon name="homeGdb" /></ToolButton>
          <Separator />
          <ToolButton aria-label="Contents view"><Icon name="catTable" /></ToolButton>
          <DropButton aria-label="View options"><Caret $grey /></DropButton>
          <Separator />
          <ToolButton aria-label="Connect to folder"><Icon name="addFolder" /></ToolButton>
          <Separator />
          <Overflow aria-label="More tools"><Icon name="doubleRight" size={10} /></Overflow>
        </CatalogTools>
        <LocationRow>
          <label htmlFor="location">Location:</label>
          <LocationBox>
            <Icon name="folderHome" />
            <select id="location">
              <option>Home - Work file\伽师县</option>
            </select>
            <Icon name="thinDown" />
          </LocationBox>
        </LocationRow>
        <CatalogBox>
          <CatalogTree>
            {catalog.map((node, i) => (
              <CatalogRow key={i} $level={node.l || 0} $leaf={node.leaf} $marked={i === 0}>
                {!node.leaf && <Expander $open={node.open} aria-label={node.t} />}
                <Icon name={node.i} />
                <span>{node.t}</span>
              </CatalogRow>
            ))}
          </CatalogTree>
          <div>
            <ScrollTrack>
              <button aria-label="Scroll left"><Icon name="chevLeft" /></button>
              <Thumb $part={128} />
              <ThumbRest $part={80} />
              <button aria-label="Scroll right"><Icon name="chevRight" /></button>
            </ScrollTrack>
          </div>
        </CatalogBox>
      </Panel>
    </Workspace>

    <StatusBar>
      <output>-36.70  71.31 Centimeters</output>
    </StatusBar>

    <Taskbar>
      <StartButton aria-label="Start">
        <svg width="20" height="20" viewBox="0 0 20 20">
          <path d="M0 3l8-1.200V9H0zM9 1.500L20 0v9H9zM0 10h8v8l-8-1zM9 10h11v10L9 18.500z" fill="#fff" />
        </svg>
      </StartButton>
      <SearchBox>
        <svg width="16" height="22" viewBox="0 0 16 22">
          <circle cx="8" cy="7" r="6" fill="none" stroke="#222" strokeWidth="1.500" />
          <path d="M4 12l-3 5" stroke="#222" strokeWidth="1.500" />
        </svg>
        <input aria-label="Search" placeholder="在这里输入你要搜索的内容" />
      </SearchBox>
      {apps.map(([name, logo]) => (
        <TaskButton key={name} aria-label={name} $active={name === 'ArcMap'}>{logo}</TaskButton>
      ))}
      <Tray>
        <TrayButton aria-label="Show hidden icons">
          <svg viewBox="0 0 20 20"><path d="M3 12l7-7 7 7" fill="none" stroke="#fff" strokeWidth="1.500" /></svg>
        </TrayButton>
        <TrayButton aria-label="WeChat"><Wechat /></TrayButton>
        <TrayButton aria-label="Network">
          <svg viewBox="0 0 20 20"><path d="M2 14C4 6 10 2 18 2M6 15C8 9 12 6 18 6M10 15c1-3 4-5 8-5" fill="none" stroke="#ddd" strokeWidth="1.500" /></svg>
        </TrayButton>
        <TrayButton aria-label="Power">
          <svg viewBox="0 0 20 20"><path d="M2 1v3M5 1v3M1 4.500h6v3H1zM4 8v4M8 4.500h11v10H4" fill="none" stroke="#fff" strokeWidth="1.500" /></svg>
        </TrayButton>
        <Ime>中</Ime>
        <Clock>19:09</Clock>
        <Notices aria-label="Notifications">
          <svg viewBox="0 0 20 20"><path d="M0 0h20v16H0z" fill="#fff" /><path d="M4 4h12M4 8h12M4 12h8" stroke="#1f1f1f" strokeWidth="1.500" /></svg>
        </Notices>
      </Tray>
    </Taskbar>
  </Window>
)

export default App
